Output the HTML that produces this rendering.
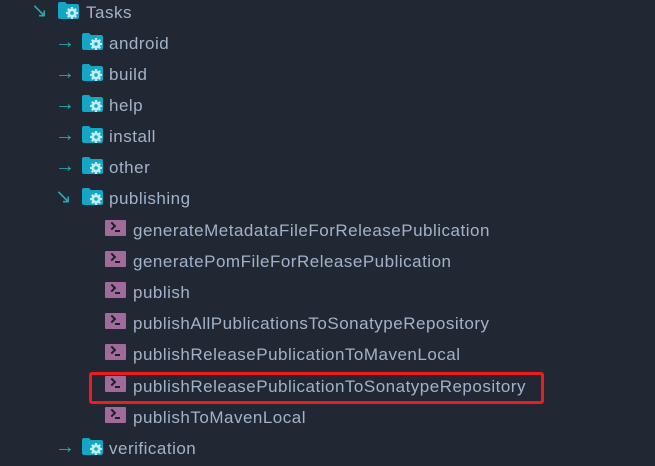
<!DOCTYPE html>
<html><head><style>
body{margin:0;width:655px;height:466px;background:#222833;overflow:hidden;font-family:"Liberation Sans",sans-serif;position:relative}
.r{position:absolute;height:24px;line-height:24px;font-size:17px;letter-spacing:0.5px;color:#a2b2c9;white-space:nowrap;margin-top:1px}
.ar{position:absolute;color:#2aa7ae;font-size:20px;line-height:24px;margin-top:-1px}
.fo{position:absolute;width:21px;height:17px}
.tm{position:absolute;width:21px;height:16px;background:#a06b9b;border-radius:1px}
.tm:before{content:"";position:absolute;left:4px;top:3px;width:4px;height:4px;border-right:2px solid #1e1e28;border-bottom:2px solid #1e1e28;transform:rotate(-45deg)}
.tm:after{content:"";position:absolute;left:10px;top:10px;width:5px;height:2px;background:#1e1e28}
.box{position:absolute;left:89px;top:372px;width:449px;height:26px;border:3px solid #ee1c1c;border-radius:3px}
</style></head><body>
<svg width="0" height="0" style="position:absolute"><defs><g id="f"><path d="M0 2 Q0 0 2 0 H7 L9 2 H19 Q21 2 21 4 V15 Q21 17 19 17 H2 Q0 17 0 15Z" fill="#14a6c4"/><circle cx="14" cy="11" r="4.5" fill="#bfeef6"/><g stroke="#bfeef6" stroke-width="2.2"><path d="M14 5V17M8 11H20M9.8 6.8L18.2 15.2M18.2 6.8L9.8 15.2"/></g><circle cx="14" cy="11" r="1.8" fill="#14a6c4"/></g></defs></svg>
<div class="ar" style="left:31px;top:0px">↘</div><svg class="fo" style="left:58px;top:2px"><use href="#f"/></svg><div class="r" style="left:86px;top:0px">Tasks</div>

<div class="ar" style="left:55px;top:31px">→</div><svg class="fo" style="left:82px;top:33px"><use href="#f"/></svg><div class="r" style="left:109px;top:31px">android</div>
<div class="ar" style="left:55px;top:62px">→</div><svg class="fo" style="left:82px;top:64px"><use href="#f"/></svg><div class="r" style="left:109px;top:62px">build</div>
<div class="ar" style="left:55px;top:93px">→</div><svg class="fo" style="left:82px;top:95px"><use href="#f"/></svg><div class="r" style="left:109px;top:93px">help</div>
<div class="ar" style="left:55px;top:124px">→</div><svg class="fo" style="left:82px;top:126px"><use href="#f"/></svg><div class="r" style="left:109px;top:124px">install</div>
<div class="ar" style="left:55px;top:155px">→</div><svg class="fo" style="left:82px;top:157px"><use href="#f"/></svg><div class="r" style="left:109px;top:155px">other</div>
<div class="ar" style="left:55px;top:186px">↘</div><svg class="fo" style="left:82px;top:188px"><use href="#f"/></svg><div class="r" style="left:109px;top:186px">publishing</div>

<div class="tm" style="left:105px;top:220px"></div><div class="r" style="left:133px;top:218px">generateMetadataFileForReleasePublication</div>
<div class="tm" style="left:105px;top:251px"></div><div class="r" style="left:133px;top:249px">generatePomFileForReleasePublication</div>
<div class="tm" style="left:105px;top:282px"></div><div class="r" style="left:133px;top:280px">publish</div>
<div class="tm" style="left:105px;top:313px"></div><div class="r" style="left:133px;top:311px">publishAllPublicationsToSonatypeRepository</div>
<div class="tm" style="left:105px;top:344px"></div><div class="r" style="left:133px;top:342px">publishReleasePublicationToMavenLocal</div>
<div class="tm" style="left:105px;top:376px"></div><div class="r" style="left:133px;top:374px">publishReleasePublicationToSonatypeRepository</div>
<div class="tm" style="left:105px;top:407px"></div><div class="r" style="left:133px;top:405px">publishToMavenLocal</div>
<div class="box"></div>
<div class="ar" style="left:55px;top:436px">→</div><svg class="fo" style="left:82px;top:438px"><use href="#f"/></svg><div class="r" style="left:109px;top:436px">verification</div>
</body></html>
